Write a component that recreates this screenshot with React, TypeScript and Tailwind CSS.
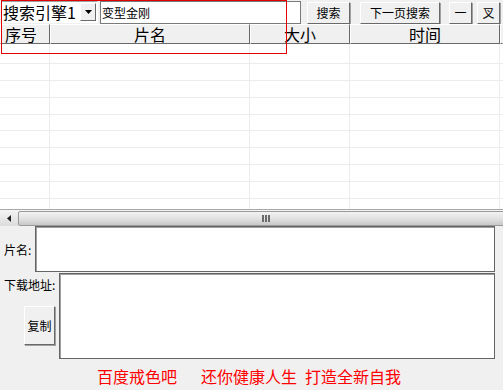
import React from 'react';

const cjk = { fontFamily: '"Noto Sans CJK SC", "Liberation Sans", sans-serif' };

function WinButton({ className, children }: { className: string; children: React.ReactNode }) {
  return (
    <div
      className={`flex items-center justify-center bg-[#f0f0f0] border border-t-white border-l-white border-r-[#696969] border-b-[#696969] shadow-[1px_1px_0_#a0a0a0] text-[12px] text-black leading-none ${className}`}
    >
      {children}
    </div>
  );
}

const columns = [
  { label: '序号', w: 'w-[50px]', align: 'justify-start pl-[4px]' },
  { label: '片名', w: 'w-[200px]', align: 'justify-center' },
  { label: '大小', w: 'w-[100px]', align: 'justify-center' },
  { label: '时间', w: 'w-[150px]', align: 'justify-center' },
];

export default function App() {
  const rows = [20, 17, 17, 17, 17, 17, 17, 17, 17, 10];
  return (
    <div className="relative w-[503px] h-[390px] overflow-hidden bg-[#f0f0f0] select-none" style={cjk}>
      {/* top search bar */}
      <div className="flex h-[24px] items-start pt-[1px]">
        <div className="ml-[1px] flex h-[22px] w-[97px] items-center border border-t-[#a0a0a0] border-l-[#a0a0a0] border-r-white border-b-white bg-white">
          <span className="flex-1 pl-[1px] text-[16px] leading-none text-black">搜索引擎1</span>
          <div className="flex h-[18px] w-[16px] items-center justify-center border border-t-white border-l-white border-r-[#696969] border-b-[#696969] bg-[#f0f0f0] mr-[1px]">
            <svg width="7" height="4" viewBox="0 0 7 4">
              <polygon points="0,0 7,0 3.5,4" fill="#000" />
            </svg>
          </div>
        </div>
        <div className="ml-[2px] flex h-[23px] w-[201px] items-center border border-[#7a7a7a] bg-white pl-[1px] text-[12px] text-black">
          变型金刚
        </div>
        <WinButton className="ml-[6px] mt-[1px] h-[22px] w-[43px]">搜索</WinButton>
        <WinButton className="ml-[10px] mt-[1px] h-[22px] w-[80px]">下一页搜索</WinButton>
        <WinButton className="ml-[9px] mt-[1px] h-[22px] w-[23px]">一</WinButton>
        <WinButton className="ml-[5px] mt-[1px] h-[22px] w-[23px]">叉</WinButton>
      </div>

      {/* list header */}
      <div className="flex h-[20px] bg-[#f0f0f0]">
        {columns.map((c) => (
          <div
            key={c.label}
            className={`${c.w} flex items-center ${c.align} border border-t-white border-l-white border-r-[#696969] border-b-[#696969] text-[16px] leading-none text-black`}
          >
            {c.label}
          </div>
        ))}
        <div className="flex-1 border border-t-white border-l-white border-b-[#696969] border-r-transparent" />
      </div>

      {/* list body */}
      <div className="flex h-[165px] flex-col bg-white">
        {rows.map((h, i) => (
          <div key={i} className={`flex ${i < rows.length - 1 ? 'border-b border-[#ececec]' : ''}`} style={{ height: h }}>
            <div className="w-[50px] border-r border-[#ececec]" />
            <div className="w-[200px] border-r border-[#ececec]" />
            <div className="w-[100px] border-r border-[#ececec]" />
            <div className="w-[150px] border-r border-[#ececec]" />
          </div>
        ))}
      </div>

      {/* horizontal scrollbar */}
      <div className="flex h-[17px] items-center border-t border-[#a8a8a8] bg-gradient-to-b from-[#f4f4f4] to-[#dcdcdc]">
        <div className="flex w-[18px] items-center justify-center">
          <svg width="4" height="7" viewBox="0 0 4 7">
            <polygon points="4,0 4,7 0,3.5" fill="#222" />
          </svg>
        </div>
        <div className="flex h-[15px] flex-1 items-center justify-center rounded-[2px] border border-[#9a9a9a] bg-gradient-to-b from-[#f2f2f2] via-[#e2e2e2] to-[#c8c8c8] mr-[-4px]">
          <svg width="9" height="7" viewBox="0 0 9 7" className="ml-[8px]">
            <rect x="0" y="0" width="2" height="7" fill="#6a6a6a" />
            <rect x="3" y="0" width="2" height="7" fill="#6a6a6a" />
            <rect x="6" y="0" width="2" height="7" fill="#6a6a6a" />
          </svg>
        </div>
      </div>

      {/* 片名 */}
      <div className="flex h-[47px] items-center">
        <span className="w-[35px] pl-[4px] text-[12px] leading-none text-black">片名:</span>
        <div className="h-[46px] w-[460px] self-start border border-[#646464] shadow-[inset_1px_1px_0_#a0a0a0] bg-white" />
      </div>

      {/* 下载地址 */}
      <div className="flex h-[87px]">
        <div className="flex w-[59px] flex-col items-start pl-[4px]">
          <span className="mt-[6px] text-[12px] leading-none text-black">下载地址:</span>
          <WinButton className="ml-[20px] mt-[15px] h-[39px] w-[31px]">复制</WinButton>
        </div>
        <div className="h-[86px] w-[436px] border border-[#646464] shadow-[inset_1px_1px_0_#a0a0a0] bg-white" />
      </div>

      {/* slogan */}
      <div className="flex h-[31px] items-center text-[16px] leading-none text-[#ff0000]">
        <span className="ml-[97px]">百度戒色吧</span>
        <span className="ml-[24px]">还你健康人生</span>
        <span className="ml-[8px]">打造全新自我</span>
      </div>

      {/* red selection outline */}
      <div className="pointer-events-none absolute left-[1px] top-0 h-[54px] w-[286px] border border-[#e00000]" />
    </div>
  );
}
